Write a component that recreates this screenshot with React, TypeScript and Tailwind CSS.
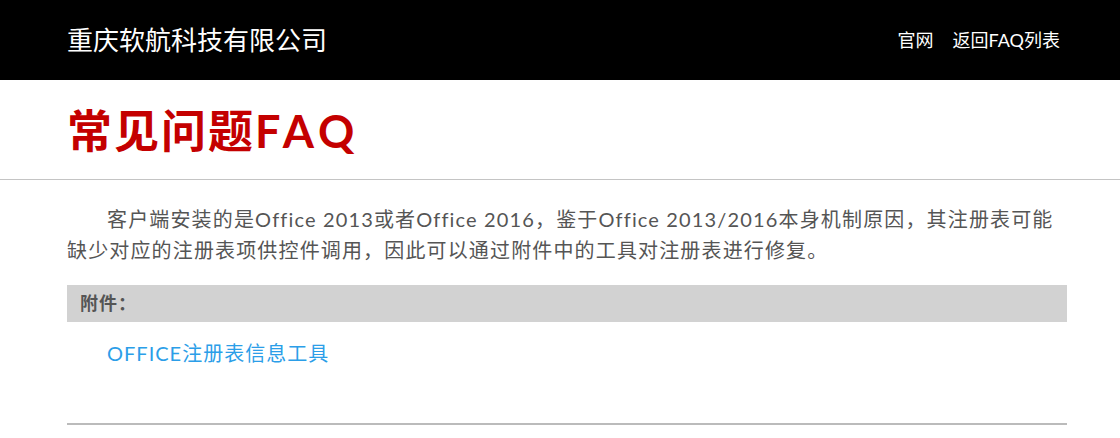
export default function App() {
  return (
    <div className="min-h-[438px] bg-white font-['Lato','Noto_Sans_CJK_SC',sans-serif]">
      <header className="h-20 bg-black">
        <div className="ml-[67px] flex h-full w-[993px] items-center justify-between">
          <h1 className="text-[26px] leading-none text-white">重庆软航科技有限公司</h1>
          <nav className="flex gap-[19px] text-[18px] leading-none text-white">
            <a href="#">官网</a>
            <a href="#">返回FAQ列表</a>
          </nav>
        </div>
      </header>

      <div className="border-b border-[#c4c4c4] pb-[24px] pt-[27px]">
        <h2 className="ml-[67px] text-[45px] font-bold leading-[48px] tracking-[2px] text-[#c40000]">
          常见问题<span className="tracking-[5px]">FAQ</span>
        </h2>
      </div>

      <main className="ml-[67px] w-[1000px]">
        <p className="mt-[24px] indent-[40px] text-[20px] leading-[31px] tracking-[1.15px] text-[#555]">
          客户端安装的是Office 2013或者Office 2016，鉴于Office 2013/2016本身机制原因，其注册表可能缺少对应的注册表项供控件调用，因此可以通过附件中的工具对注册表进行修复。
        </p>

        <div className="mt-[19px] flex h-[37px] items-center bg-[#d2d2d2] pl-[13px] text-[18px] font-bold tracking-[1px] text-[#555]">
          附件：
        </div>

        <div className="pl-[40px] pt-[17px]">
          <a href="#" className="text-[20px] leading-[28px] tracking-[1px] text-[#2b9ee8]">
            OFFICE注册表信息工具
          </a>
        </div>

        <div className="mt-[56px] h-[2px] bg-[#bbbbbb]" />
      </main>
    </div>
  )
}
